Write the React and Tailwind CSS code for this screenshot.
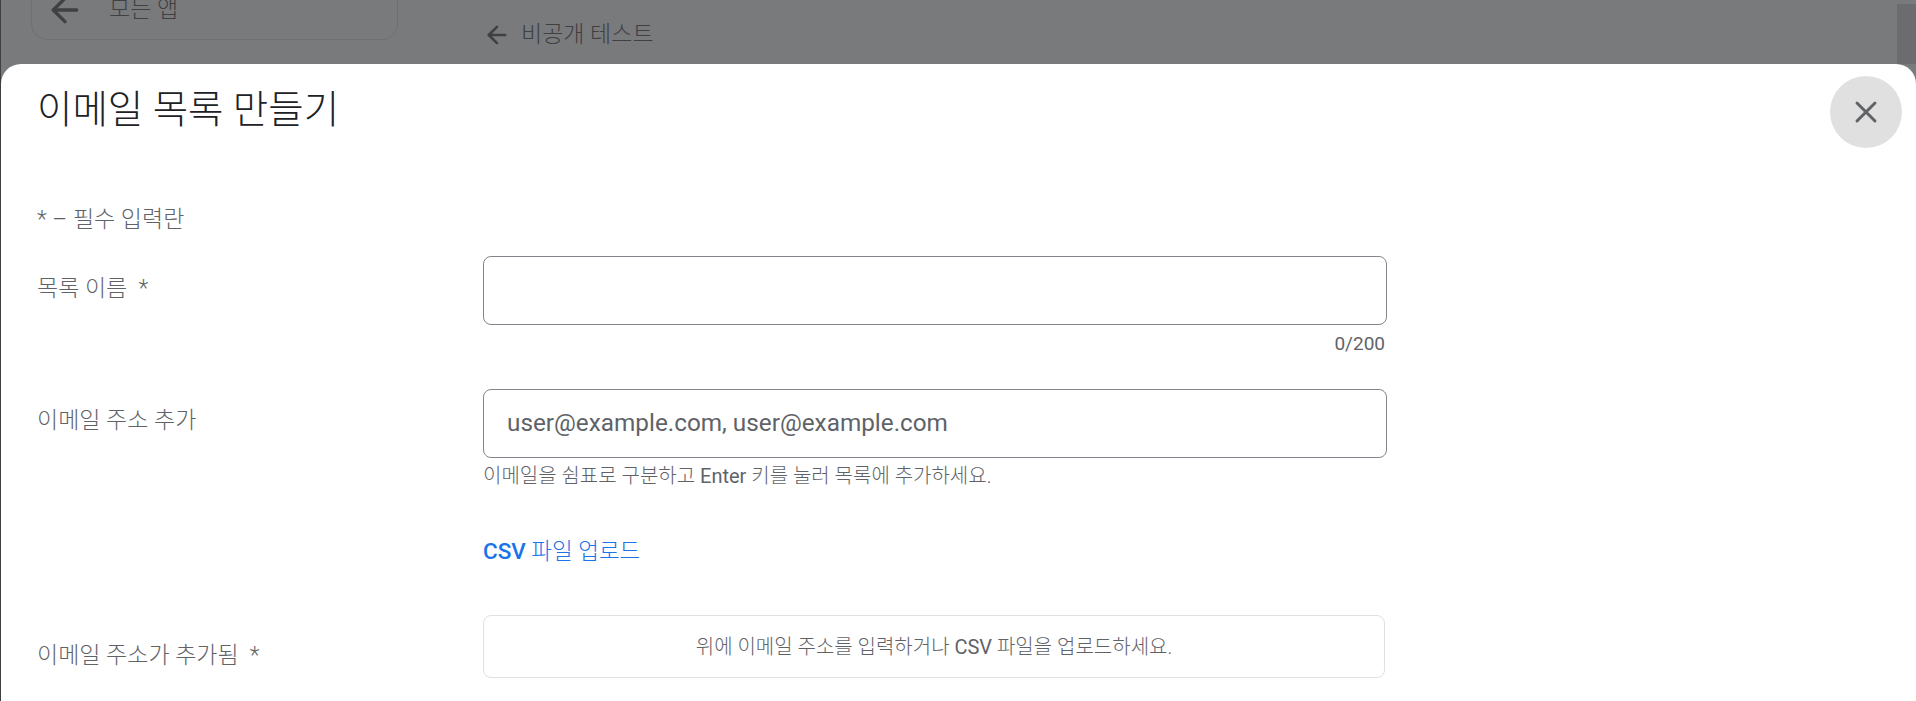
import { X, ArrowLeft } from 'lucide-react';

const FONT = 'font-[Roboto,"Noto_Sans_CJK_KR",sans-serif]';

const Field = ({ label, className = '', children }) => (
  <div className={`flex ${className}`}>
    <div className="w-[446px] shrink-0 whitespace-pre pt-[18px] text-[23px] font-light leading-[28px] text-[#5f6368]">{label}</div>
    <div className="w-[904px]">{children}</div>
  </div>
);

const App = () => {
  return (
    <div className={`relative h-[701px] w-full overflow-hidden bg-[#797a7c] ${FONT}`}>
      {/* dimmed page behind the dialog */}
      <div className="absolute left-0 top-0 h-full w-px bg-[#3c4043]" />
      <div className="absolute right-0 top-1 h-[60px] w-[19px] bg-[#6c6c70]" />
      <div className="flex h-16 items-start pl-[31px] text-[#3f4043]">
        <div className="-mt-8 flex h-[72px] w-[367px] items-center gap-[24px] rounded-2xl border border-[#6f7072] pl-[13px] pt-[12px] text-[23px]">
          <ArrowLeft className="h-10 w-10" strokeWidth={2} />
          <span className="font-light">모든 앱</span>
        </div>
        <div className="ml-[85px] mt-[20px] flex items-center gap-[10px] text-[23px] leading-[30px]">
          <ArrowLeft className="h-7 w-7" strokeWidth={2.2} />
          <span className="font-light">비공개 테스트</span>
        </div>
      </div>

      {/* dialog */}
      <div className="absolute inset-x-0 bottom-0 left-px top-16 rounded-t-[20px] bg-white pl-[36px]">
        <button className="absolute right-[14px] top-3 flex h-[72px] w-[72px] items-center justify-center rounded-full bg-[#e0e0e0] text-[#5f6368]">
          <X className="h-9 w-9" strokeWidth={2} />
        </button>
        <h1 className="pt-[22px] text-[38.5px] font-light leading-[48px] text-[#202124]">이메일 목록 만들기</h1>
        <p className="mt-[72px] text-[23px] font-light leading-[28px] text-[#5f6368]">* – 필수 입력란</p>

        <Field label="목록 이름  *" className="mt-[23px]">
          <div className="-mt-px h-[69px] rounded-lg border border-[#80868b]" />
          <div className="mt-[7px] pr-[2px] text-right text-[19px] leading-[24px] text-[#5f6368]">0/200</div>
        </Field>

        <Field label="이메일 주소 추가" className="mt-[33px]">
          <div className="flex h-[69px] items-center rounded-lg border border-[#80868b] pl-[23px] text-[24.3px] text-[#5f6368]">
            user@example.com, user@example.com
          </div>
          <div className="mt-[5px] text-[20px] font-light leading-[26px] text-[#5f6368]">
            이메일을 쉼표로 구분하고 <span className="font-normal">Enter</span> 키를 눌러 목록에 추가하세요.
          </div>
          <div className="mt-[47px] text-[22.5px] font-light leading-[30px] text-[#1a73e8]">
            <span className="font-medium">CSV</span> 파일 업로드
          </div>
        </Field>

        <Field label="이메일 주소가 추가됨  *" className="mt-[49px] items-center">
          <div className="flex h-[63px] w-[902px] items-center justify-center rounded-lg border border-[#e0e0e0] text-[20px] font-light text-[#5f6368]">
            <span className="whitespace-pre">위에 이메일 주소를 입력하거나 <span className="font-normal">CSV</span> 파일을 업로드하세요.</span>
          </div>
        </Field>
      </div>
    </div>
  );
};

export default App;
